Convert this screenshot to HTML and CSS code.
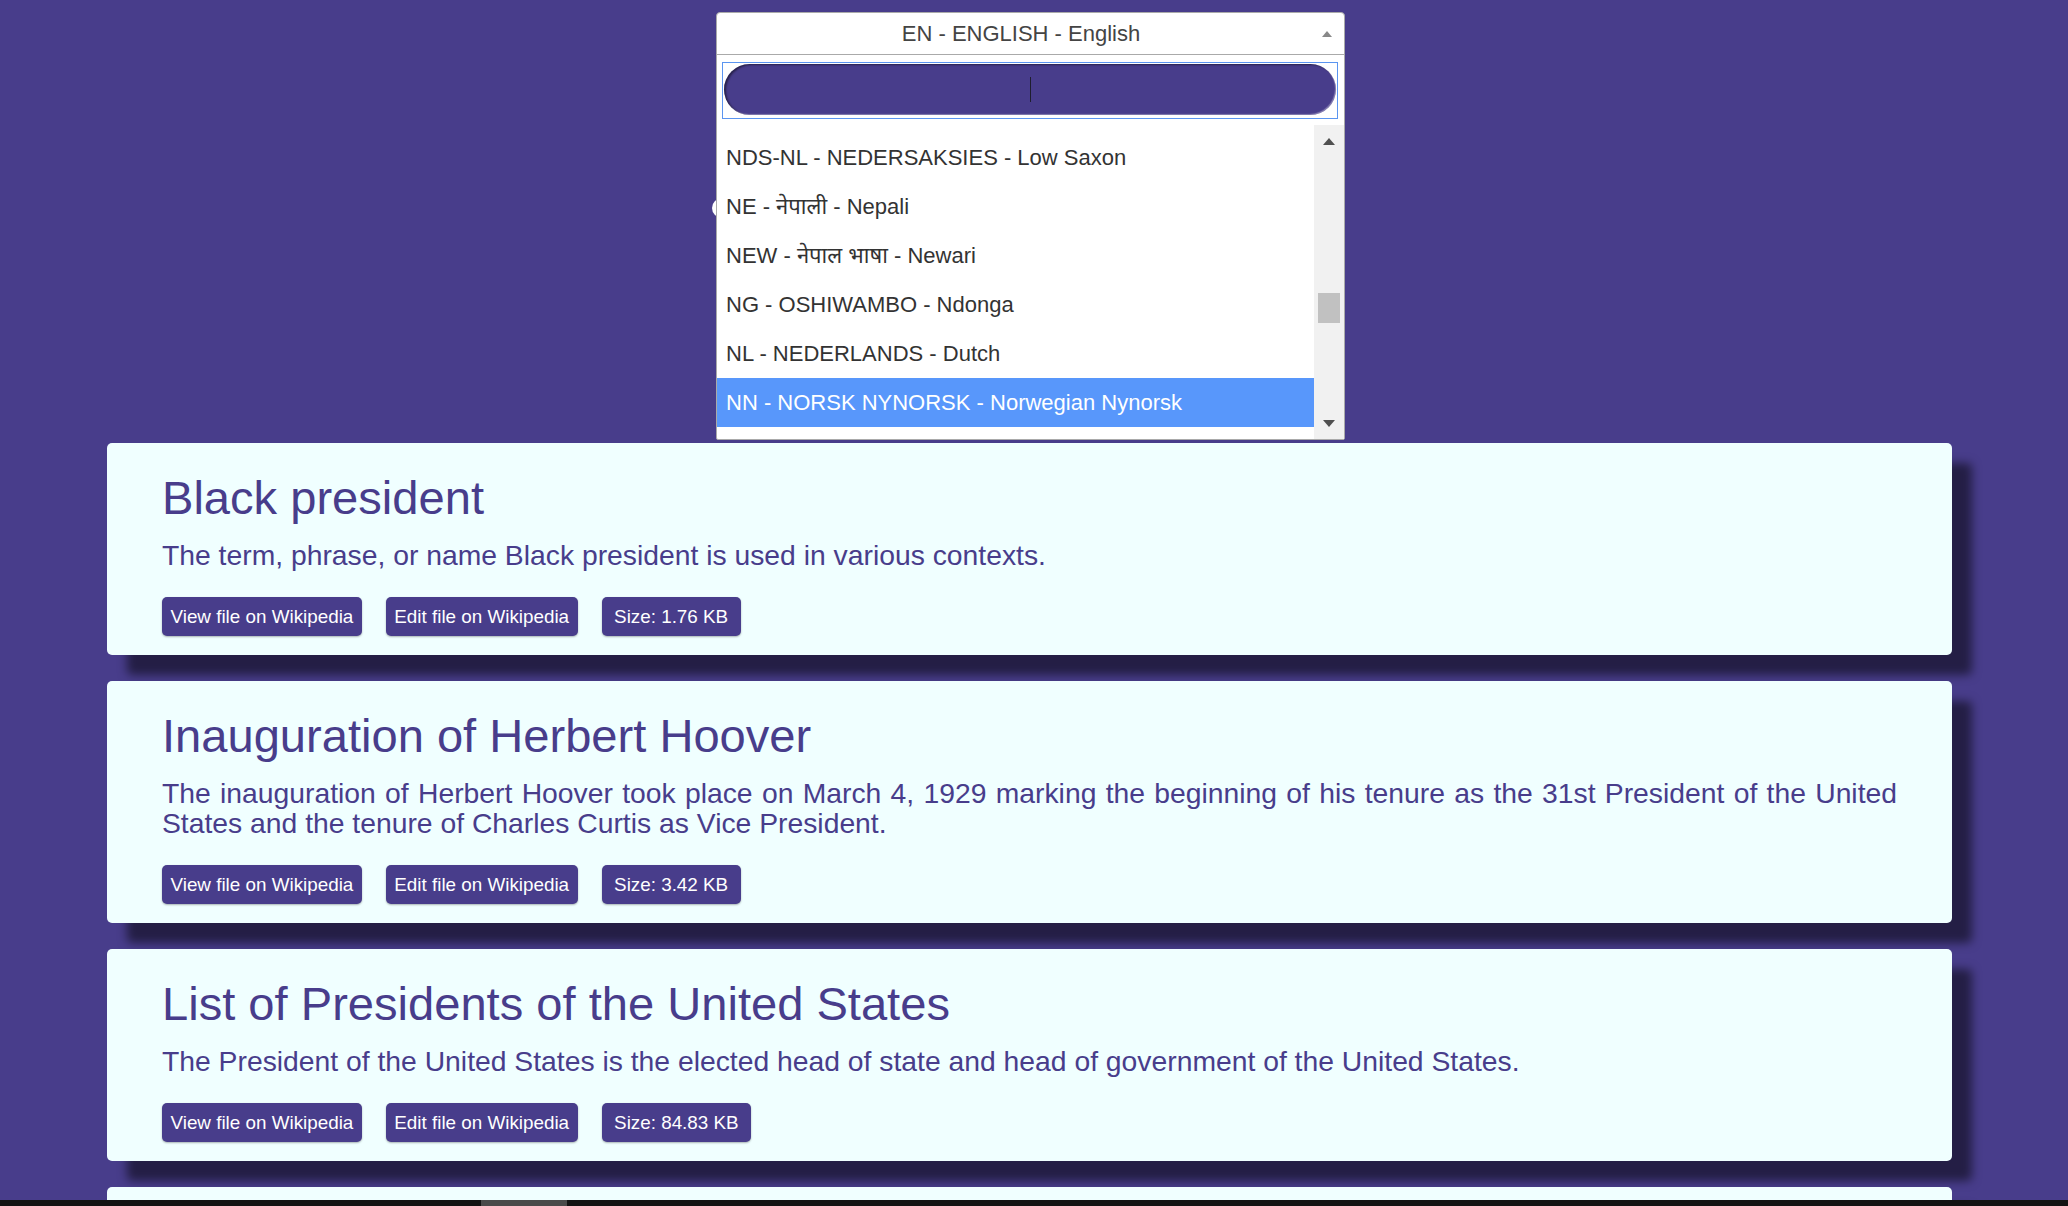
FILE: index.html
```html
<!DOCTYPE html>
<html lang="en">
<head>
<meta charset="utf-8">
<title>Wikipedia search</title>
<link rel="stylesheet" href="styles.css">
</head>
<body>
<header class="top">
  <span class="peek"></span>
  <div class="select">
    <div class="sel-head">EN - ENGLISH - English<span class="sel-arrow"></span></div>
    <div class="sel-search">
      <div class="search-box"><div class="search-pill"><span class="caret"></span></div></div>
    </div>
    <div class="sel-list">
      <ul class="options">
        <li>NDS-NL - NEDERSAKSIES - Low Saxon</li>
        <li>NE - नेपाली - Nepali</li>
        <li>NEW - नेपाल भाषा - Newari</li>
        <li>NG - OSHIWAMBO - Ndonga</li>
        <li>NL - NEDERLANDS - Dutch</li>
        <li class="hl">NN - NORSK NYNORSK - Norwegian Nynorsk</li>
      </ul>
      <div class="vscroll">
        <span class="sb-up"></span>
        <span class="sb-thumb"></span>
        <span class="sb-down"></span>
      </div>
    </div>
  </div>
</header>

<main class="cards">
  <section class="card">
    <h2 class="card-title">Black president</h2>
    <p class="card-desc">The term, phrase, or name Black president is used in various contexts.</p>
    <div class="card-actions">
      <a class="btn">View file on Wikipedia</a>
      <a class="btn">Edit file on Wikipedia</a>
      <span class="btn size">Size: 1.76 KB</span>
    </div>
  </section>
  <section class="card">
    <h2 class="card-title">Inauguration of Herbert Hoover</h2>
    <p class="card-desc">The inauguration of Herbert Hoover took place on March 4, 1929 marking the beginning of his tenure as the 31st President of the United States and the tenure of Charles Curtis as Vice President.</p>
    <div class="card-actions">
      <a class="btn">View file on Wikipedia</a>
      <a class="btn">Edit file on Wikipedia</a>
      <span class="btn size">Size: 3.42 KB</span>
    </div>
  </section>
  <section class="card">
    <h2 class="card-title">List of Presidents of the United States</h2>
    <p class="card-desc">The President of the United States is the elected head of state and head of government of the United States.</p>
    <div class="card-actions">
      <a class="btn">View file on Wikipedia</a>
      <a class="btn">Edit file on Wikipedia</a>
      <span class="btn size">Size: 84.83 KB</span>
    </div>
  </section>
  <section class="card card-next"></section>
</main>

<div class="bottombar"><span class="bottombar-thumb"></span></div>
</body>
</html>
```
FILE: styles.css
```css
html, body {
  margin: 0;
  padding: 0;
  overflow: hidden;
  height: 100%;
}
body {
  background: #483d8b;
  font-family: "Liberation Sans", Arial, "Noto Sans Devanagari", "Lohit Devanagari", "FreeSans", sans-serif;
}

/* ---------- top / select ---------- */
.top {
  position: relative;
  height: 443px;
  box-sizing: border-box;
  padding-top: 12px;
}
.peek {
  position: absolute;
  left: 712px;
  top: 198px;
  width: 20px;
  height: 20px;
  border-radius: 50%;
  background: #ffffff;
  z-index: 0;
}
.select {
  position: relative;
  z-index: 1;
  width: 629px;
  margin-left: 716px;
  box-sizing: border-box;
  background: #ffffff;
  border: 1px solid #aaaaaa;
  border-radius: 4px 4px 2px 2px;
  font-size: 22px;
  color: #333333;
}
.sel-head {
  position: relative;
  height: 41px;
  line-height: 42px;
  padding: 0 31px 0 12px;
  text-align: center;
  color: #444444;
  border-bottom: 1px solid #aaaaaa;
}
.sel-arrow {
  position: absolute;
  right: 12px;
  top: 18px;
  width: 0;
  height: 0;
  border-style: solid;
  border-width: 0 5px 6px 5px;
  border-color: transparent transparent #888888 transparent;
}
.sel-search {
  padding: 7px 6px 6px 5px;
}
.search-box {
  height: 53px;
  border: 1px solid #5b95f0;
  padding: 1px;
  box-sizing: content-box;
}
.search-pill {
  height: 51px;
  border-radius: 26px;
  background: #483d8b;
  box-shadow: inset 2px 1px 2px rgba(0, 0, 0, 0.45), inset -1px -1px 1px rgba(255, 255, 255, 0.35);
  display: flex;
  align-items: center;
  justify-content: center;
}
.caret {
  display: block;
  width: 1px;
  height: 25px;
  background: #1e1e2e;
}
.sel-list {
  display: flex;
  height: 314px;
  overflow: hidden;
}
.options {
  flex: 1;
  list-style: none;
  margin: 0;
  padding: 8px 0 0 0;
}
.options li {
  height: 49px;
  line-height: 49px;
  padding: 0 9px;
  white-space: nowrap;
}
.options li.hl {
  background: #5897fb;
  color: #ffffff;
}
.vscroll {
  width: 30px;
  background: #f1f1f1;
  display: flex;
  flex-direction: column;
  align-items: center;
  padding-top: 13px;
  box-sizing: border-box;
}
.sb-up {
  width: 0;
  height: 0;
  border-style: solid;
  border-width: 0 6px 7px 6px;
  border-color: transparent transparent #505050 transparent;
}
.sb-thumb {
  width: 22px;
  height: 30px;
  margin-top: 148px;
  background: #c1c1c1;
}
.sb-down {
  width: 0;
  height: 0;
  margin-top: 97px;
  border-style: solid;
  border-width: 7px 6px 0 6px;
  border-color: #505050 transparent transparent transparent;
}

/* ---------- cards ---------- */
.cards {
  padding: 0 116px 0 107px;
  display: flex;
  flex-direction: column;
  gap: 26px;
}
.card {
  background: #f0ffff;
  border-radius: 5px;
  padding: 28px 55px 19px 55px;
  box-shadow: 20px 20px 10px rgba(0, 0, 0, 0.5);
  color: #483d8b;
}
.card-next {
  height: 166px;
}
.card-title {
  margin: 0;
  font-size: 47.1px;
  font-weight: normal;
  line-height: 54px;
}
.card-desc {
  margin: 15px 0 0 0;
  font-size: 28.3px;
  line-height: 30px;
  text-align: justify;
}
.card-actions {
  margin-top: 27px;
  display: flex;
  gap: 24px;
}
.btn {
  display: inline-block;
  background: #483d8b;
  color: #ffffff;
  font-size: 18.84px;
  line-height: 22px;
  padding: 8.5px 8.5px;
  border-radius: 5px;
  box-shadow: 0 1px 2px rgba(0, 0, 0, 0.3);
  text-decoration: none;
  white-space: nowrap;
}
.btn.size {
  padding: 8.5px 12.5px;
}

/* ---------- bottom strip ---------- */
.bottombar {
  position: fixed;
  left: 0;
  right: 0;
  bottom: 0;
  height: 6px;
  background: #131313;
}
.bottombar-thumb {
  position: absolute;
  left: 481px;
  top: 0;
  width: 86px;
  height: 6px;
  background: #4a4a4a;
}
```
